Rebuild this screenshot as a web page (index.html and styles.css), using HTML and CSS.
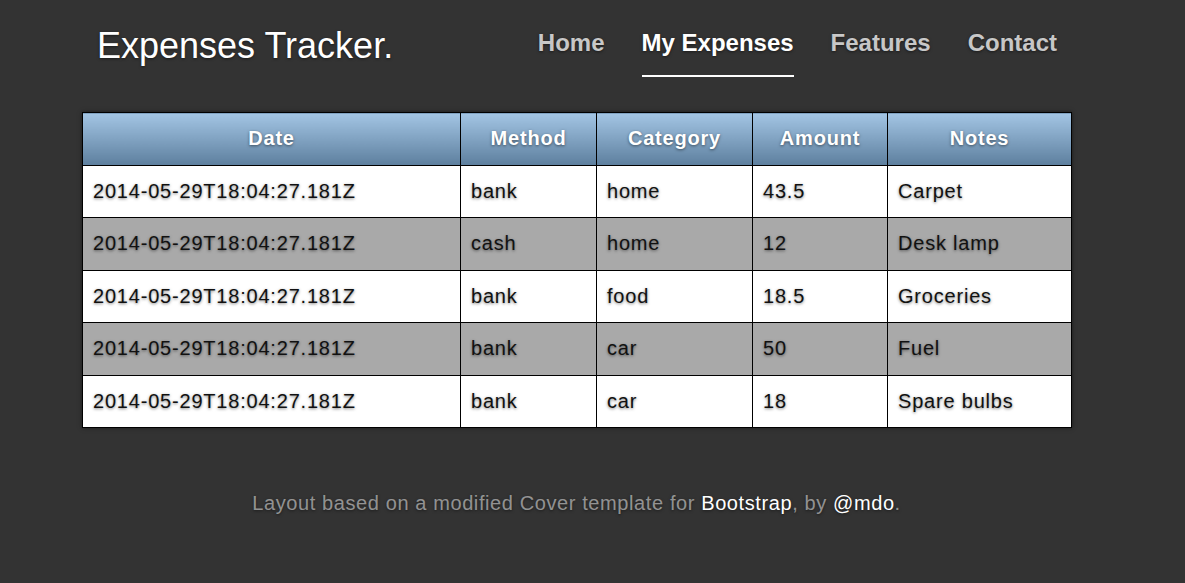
FILE: index.html
```html
<!DOCTYPE html>
<html lang="en">
<head>
<meta charset="utf-8">
<title>Expenses Tracker</title>
<link rel="stylesheet" href="styles.css">
</head>
<body>
<div class="site">
  <header class="masthead">
    <h3 class="brand">Expenses Tracker.</h3>
    <nav class="nav">
      <a href="#" class="nav-link">Home</a>
      <a href="#" class="nav-link active">My Expenses</a>
      <a href="#" class="nav-link">Features</a>
      <a href="#" class="nav-link">Contact</a>
    </nav>
  </header>

  <table class="expenses">
    <colgroup>
      <col class="c-date">
      <col class="c-method">
      <col class="c-cat">
      <col class="c-amount">
      <col class="c-notes">
    </colgroup>
    <thead>
      <tr><th>Date</th><th>Method</th><th>Category</th><th>Amount</th><th>Notes</th></tr>
    </thead>
    <tbody>
      <tr><td>2014-05-29T18:04:27.181Z</td><td>bank</td><td>home</td><td>43.5</td><td>Carpet</td></tr>
      <tr><td>2014-05-29T18:04:27.181Z</td><td>cash</td><td>home</td><td>12</td><td>Desk lamp</td></tr>
      <tr><td>2014-05-29T18:04:27.181Z</td><td>bank</td><td>food</td><td>18.5</td><td>Groceries</td></tr>
      <tr><td>2014-05-29T18:04:27.181Z</td><td>bank</td><td>car</td><td>50</td><td>Fuel</td></tr>
      <tr><td>2014-05-29T18:04:27.181Z</td><td>bank</td><td>car</td><td>18</td><td>Spare bulbs</td></tr>
    </tbody>
  </table>

  <footer class="mastfoot">
    <p>Layout based on a modified Cover template for <a href="#">Bootstrap</a>, by <a href="#">@mdo</a>.</p>
  </footer>
</div>
</body>
</html>
```

FILE: styles.css
```css
html, body {
  margin: 0;
  padding: 0;
  height: 100%;
}

body {
  background: #333333;
  color: #ffffff;
  font-family: "Liberation Sans", Arial, sans-serif;
  text-shadow: 0 1px 3px rgba(0, 0, 0, 0.5);
}

.site {
  width: 989px;
  margin-left: 82px;
}

.masthead {
  display: flex;
  justify-content: space-between;
  align-items: flex-start;
  padding: 26px 14px 0 15px;
}

.brand {
  margin: 0;
  font-size: 36px;
  line-height: 40px;
  font-weight: normal;
  color: #ffffff;
}

.nav {
  display: flex;
  gap: 37px;
  margin-top: 3px;
}

.nav-link {
  display: block;
  font-size: 24px;
  line-height: 28px;
  font-weight: bold;
  color: rgba(255, 255, 255, 0.75);
  text-decoration: none;
  padding-bottom: 18px;
  border-bottom: 2px solid transparent;
}

.nav-link.active {
  color: #ffffff;
  border-bottom-color: #ffffff;
}

.expenses {
  margin-top: 35px;
  width: 989px;
  table-layout: fixed;
  border-collapse: collapse;
  border: 1px solid #000;
  box-shadow: 0 0 4px rgba(0, 0, 0, 0.5);
  font-size: 20px;
  letter-spacing: 0.8px;
}

.c-date { width: 378px; }
.c-method { width: 136px; }
.c-cat { width: 156px; }
.c-amount { width: 135px; }
.c-notes { width: 184px; }

.expenses tr {
  height: 52.5px;
}

.expenses th,
.expenses td {
  border: 1px solid #000;
  padding: 0 10px;
  vertical-align: middle;
  white-space: nowrap;
}

.expenses th {
  background: linear-gradient(to bottom, #a3c5e4 0%, #5d7f9e 100%);
  color: #ffffff;
  font-weight: bold;
  text-align: center;
}

.expenses td {
  background: #ffffff;
  color: #111111;
  text-align: left;
}

.expenses tbody tr:nth-child(even) td {
  background: #a9a9a9;
}

.mastfoot {
  margin-top: 63px;
  text-align: center;
  color: rgba(255, 255, 255, 0.5);
  font-size: 20px;
  line-height: 24px;
  letter-spacing: 0.6px;
}

.mastfoot p {
  margin: 0;
}

.mastfoot a {
  color: #ffffff;
  text-decoration: none;
}
```
